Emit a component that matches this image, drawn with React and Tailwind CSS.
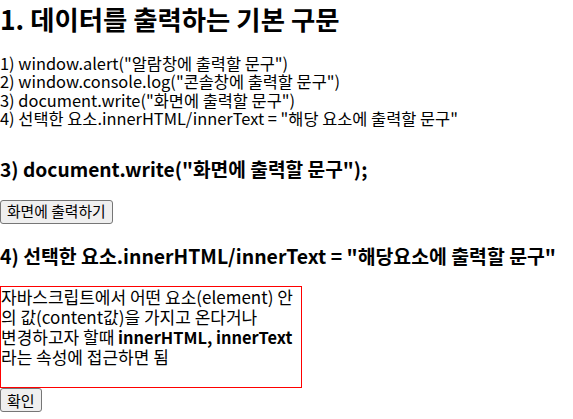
export default function App() {
  return (
    <div className="bg-white text-black w-[573px] h-[419px] overflow-hidden font-['Noto_Sans_CJK_KR',sans-serif]">
      <h2 className="mt-[3px] text-[26.4px] leading-[32px] font-bold whitespace-nowrap">1. 데이터를 출력하는 기본 구문</h2>
      <p className="mt-[19px] text-[16.4px] leading-[18.4px] whitespace-nowrap">
        1) window.alert("알람창에 출력할 문구")<br />
        2) window.console.log("콘솔창에 출력할 문구")<br />
        3) document.write("화면에 출력할 문구")<br />
        4) 선택한 요소.innerHTML/innerText = "해당 요소에 출력할 문구"
      </p>
      <h3 className="mt-[29px] text-[19.2px] leading-[25px] font-bold whitespace-nowrap">3) document.write("화면에 출력할 문구");</h3>
      <button className="mt-[18px] h-[24px] px-[6px] text-[14.8px] leading-none border border-[#767676] rounded-[3px] bg-[#efefef]">화면에 출력하기</button>
      <h3 className="mt-[19px] text-[19.4px] leading-[25px] font-bold whitespace-nowrap">4) 선택한 요소.innerHTML/innerText = "해당요소에 출력할 문구"</h3>
      <div className="mt-[18px] w-[302px] h-[102px] border border-[#ff0000] text-[17px] leading-[20px] whitespace-nowrap">
        자바스크립트에서 어떤 요소(element) 안<br />
        의 값(content값)을 가지고 온다거나<br />
        변경하고자 할때 <b className="text-[16.4px]">innerHTML, innerText</b><br />
        라는 속성에 접근하면 됨
      </div>
      <button className="h-[24px] px-[6px] text-[15px] leading-none border border-[#767676] rounded-[3px] bg-[#efefef]">확인</button>
    </div>
  );
}
